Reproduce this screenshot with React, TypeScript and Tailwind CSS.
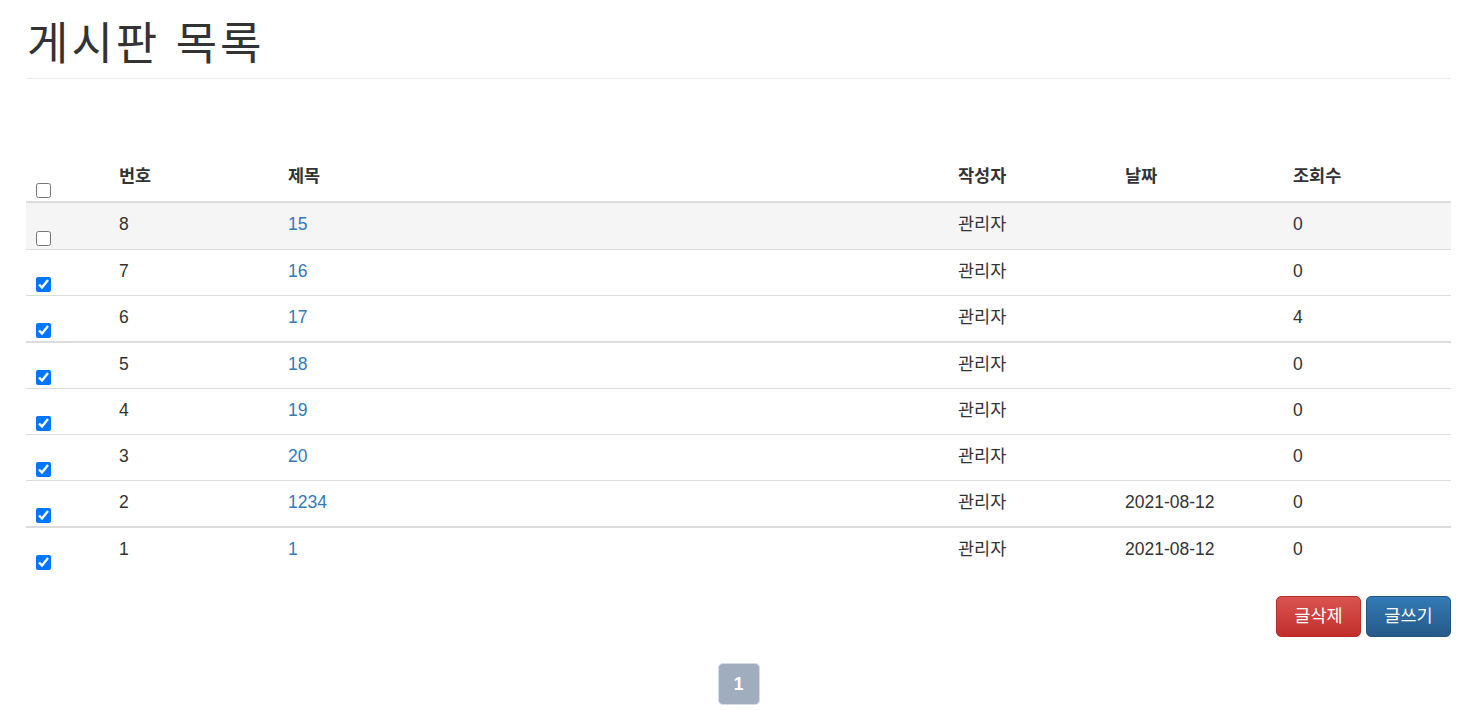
const font = { fontFamily: '"Liberation Sans", "Noto Sans CJK KR", sans-serif' }

type Post = { no: number; title: string; date: string; views: number; checked: boolean; thick?: boolean; hover?: boolean }

const posts: Post[] = [
  { no: 8, title: '15', date: '', views: 0, checked: false, hover: true },
  { no: 7, title: '16', date: '', views: 0, checked: true },
  { no: 6, title: '17', date: '', views: 4, checked: true },
  { no: 5, title: '18', date: '', views: 0, checked: true, thick: true },
  { no: 4, title: '19', date: '', views: 0, checked: true },
  { no: 3, title: '20', date: '', views: 0, checked: true },
  { no: 2, title: '1234', date: '2021-08-12', views: 0, checked: true },
  { no: 1, title: '1', date: '2021-08-12', views: 0, checked: true, thick: true },
]

function Check({ checked }: { checked: boolean }) {
  return (
    <div className="w-[85px] shrink-0 pl-[10px] pb-[3px] flex items-end">
      <input type="checkbox" defaultChecked={checked} className="w-[15px] h-[15px] m-0" />
    </div>
  )
}

export default function App() {
  return (
    <div className="min-h-screen bg-white text-[#333] pl-[26px] pr-[17px]" style={font}>
      <h1 className="pt-[20px] pb-[8px] text-[45px] leading-[50px] tracking-[3px] font-normal border-b border-[#eee] pl-[1px]">
        게시판 목록
      </h1>

      <div className="mt-[79px] text-[17.5px] leading-[25px]">
        <div className="flex h-[45px] border-b-2 border-[#ddd] font-bold">
          <Check checked={false} />
          <div className="w-[169px] shrink-0 px-[8px] pt-[6px]">번호</div>
          <div className="w-[670px] shrink-0 px-[8px] pt-[6px]">제목</div>
          <div className="w-[167px] shrink-0 px-[8px] pt-[6px]">작성자</div>
          <div className="w-[168px] shrink-0 px-[8px] pt-[6px]">날짜</div>
          <div className="flex-1 px-[8px] pt-[6px]">조회수</div>
        </div>
        {posts.map((p, i) => (
          <div
            key={p.no}
            className={`flex h-[46px] ${i === 0 ? '' : p.thick ? 'border-t-2 h-[47px]' : 'border-t'} border-[#ddd] ${p.hover ? 'bg-[#f5f5f5]' : ''}`}
          >
            <Check checked={p.checked} />
            <div className="w-[169px] shrink-0 px-[8px] pt-[9px]">{p.no}</div>
            <div className="w-[670px] shrink-0 px-[8px] pt-[9px]">
              <a href="#" className="text-[#337ab7]">{p.title}</a>
            </div>
            <div className="w-[167px] shrink-0 px-[8px] pt-[9px]">관리자</div>
            <div className="w-[168px] shrink-0 px-[8px] pt-[9px]">{p.date}</div>
            <div className="flex-1 px-[8px] pt-[9px]">{p.views}</div>
          </div>
        ))}
      </div>

      <div className="flex justify-end gap-[5px] mt-[23px]">
        <button className="w-[85px] h-[41px] rounded-[5px] border border-[#b92c28] bg-gradient-to-b from-[#d9534f] to-[#c12e2a] text-white text-[17.5px]">
          글삭제
        </button>
        <button className="w-[85px] h-[41px] rounded-[5px] border border-[#245580] bg-gradient-to-b from-[#337ab7] to-[#265a88] text-white text-[17.5px]">
          글쓰기
        </button>
      </div>

      <div className="flex justify-center mt-[26px]">
        <span className="w-[42px] h-[42px] rounded-[5px] bg-[#a0adbe] border border-[#d5dbe2] text-white font-bold text-[17.5px] flex items-center justify-center">
          1
        </span>
      </div>
    </div>
  )
}
